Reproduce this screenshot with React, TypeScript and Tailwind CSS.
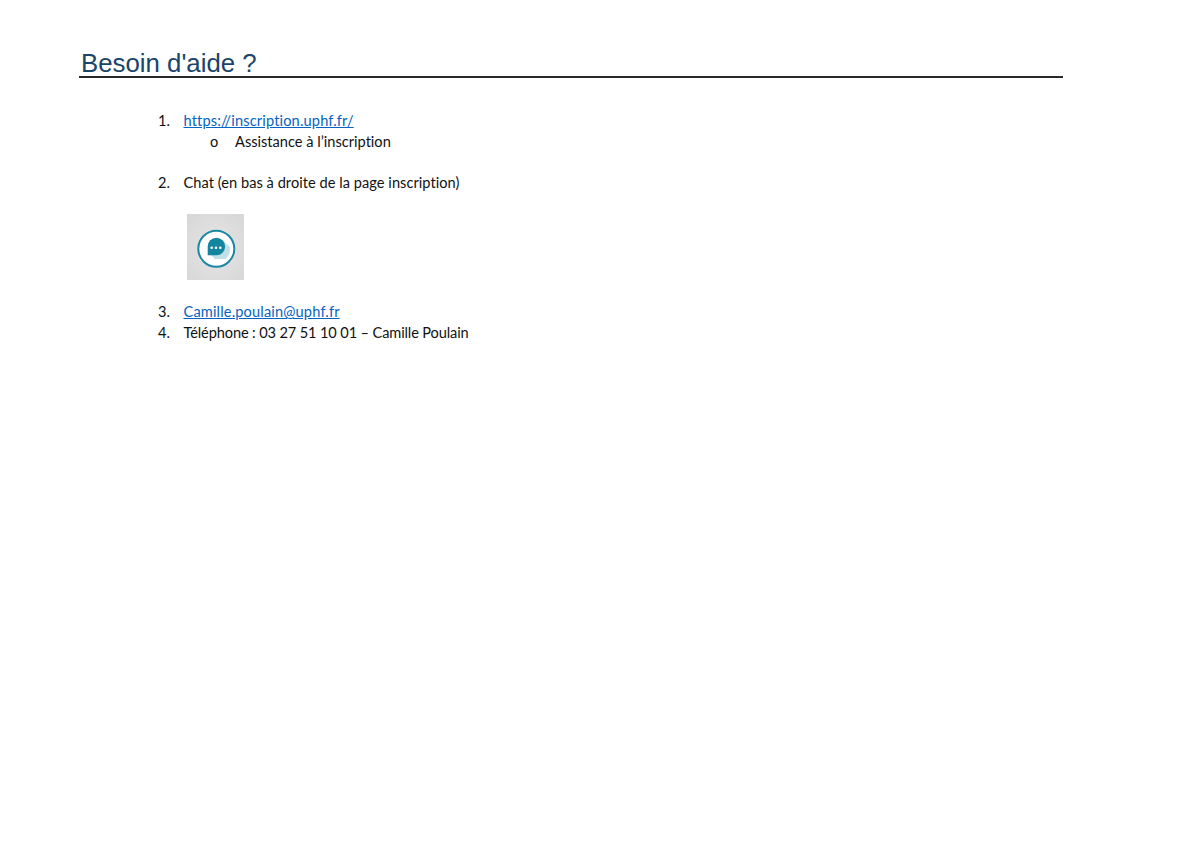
import React from 'react';

const ChatBadge: React.FC = () => (
  <svg width="57" height="66" viewBox="0 0 57 66" className="block">
    <defs>
      <radialGradient id="badgeBg" cx="50%" cy="53%" r="65%">
        <stop offset="0%" stopColor="#e6e6e6" />
        <stop offset="100%" stopColor="#d8d8d8" />
      </radialGradient>
    </defs>
    <rect width="57" height="66" fill="url(#badgeBg)" />
    <circle cx="29.300" cy="34.700" r="18" fill="#ffffff" stroke="#1a88a3" strokeWidth="2" />
    <path d="M36 27 L43 33 Q43.500 41 38.500 45 L28 45 L24 41 Z" fill="#c2dee7" />
    <path d="M20.700 41.200 V32.500 a8.700 8.700 0 1 1 8.700 8.700 Z" fill="#14859f" />
    <circle cx="24.700" cy="33.700" r="1.300" fill="#ffffff" />
    <circle cx="29" cy="33.700" r="1.300" fill="#ffffff" />
    <circle cx="33.300" cy="33.700" r="1.300" fill="#ffffff" />
  </svg>
);

const Row: React.FC<{ marker: string; children: React.ReactNode }> = ({ marker, children }) => (
  <li className="flex h-[20.67px] items-center">
    <span className="w-[25.500px] shrink-0">{marker}</span>
    <span>{children}</span>
  </li>
);

export default function App() {
  return (
    <div className="w-[1200px] h-[848px] bg-white overflow-hidden pt-[47px] pl-[79px] text-[#111111] text-[14.600px] [font-variant-ligatures:none] font-['Lato','Liberation_Sans',sans-serif]">
      {/* Title */}
      <div className="w-[984px] h-[31px] border-b-2 border-[#2a2a2a] pl-[2px]">
        <h1 className="text-[25.800px] leading-[33px] text-[#1a4469] font-['Liberation_Sans',Arial,sans-serif]">
          Besoin d'aide ?
        </h1>
      </div>

      {/* Liste */}
      <ul className="pt-[33px] pl-[79px]">
        <Row marker="1.">
          <a className="text-[#0563c1] underline tracking-[0.15px]">https://inscription.uphf.fr/</a>
        </Row>
        <li className="flex h-[20.67px] items-center pl-[52px]">
          <span className="w-[25px] shrink-0">o</span>
          <span>Assistance à l’inscription</span>
        </li>
        <li className="h-[20.67px]" />
        <Row marker="2.">
          <span className="tracking-[0.04px]">Chat (en bas à droite de la page inscription)</span>
        </Row>
        <li className="pt-[20px] pl-[29px] pb-[22px]">
          <ChatBadge />
        </li>
        <Row marker="3.">
          <a className="text-[#0563c1] underline tracking-[0.15px]">Camille.poulain@uphf.fr</a>
        </Row>
        <Row marker="4.">
          <span className="tracking-[-0.13px]">Téléphone : 03 27 51 10 01 – Camille Poulain</span>
        </Row>
      </ul>
    </div>
  );
}
